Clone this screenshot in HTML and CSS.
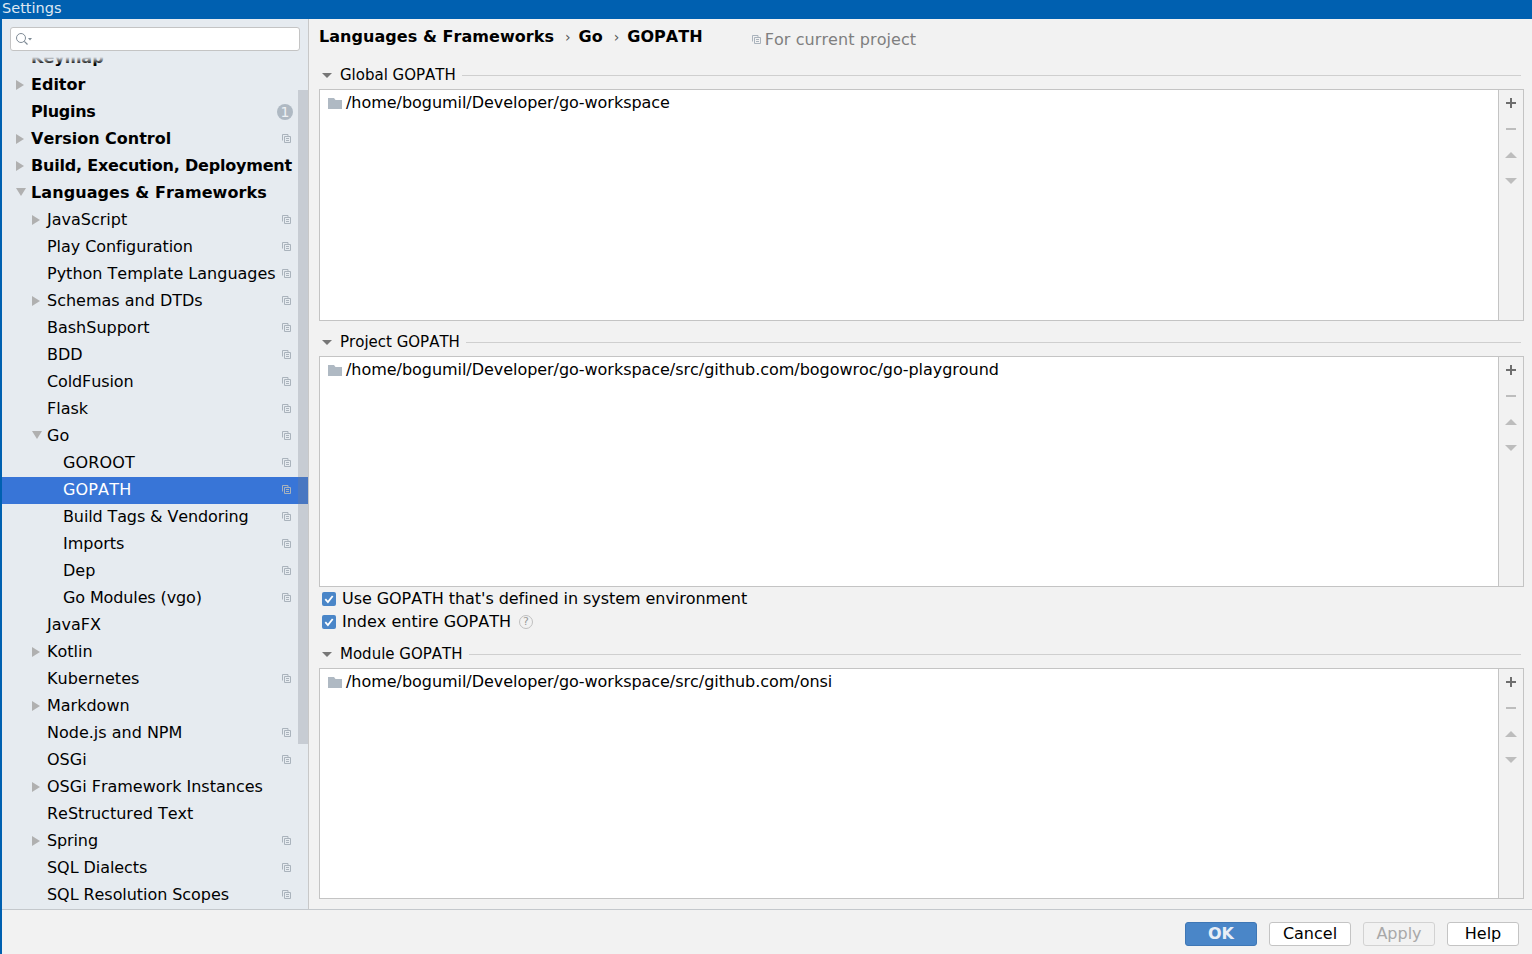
FILE: index.html
```html
<!DOCTYPE html>
<html lang="en">
<head>
<meta charset="utf-8">
<title>Settings</title>
<link rel="stylesheet" href="styles.css">
</head>
<body>
<svg class="defs" width="0" height="0" aria-hidden="true">
  <symbol id="copy" viewBox="0 0 9 9"><path d="M.5 6.500v-6h5.500v2" fill="none" stroke="#aab3bc"/><path d="M2.500 2.500h6v6h-6zM4 4.500h3M4 6.500h3" fill="none" stroke="#aab3bc"/></symbol>
  <symbol id="folder" viewBox="0 0 14 12"><path d="M0 1h6l1.500 2H14v9H0z" fill="#afb9c3"/></symbol>
  <symbol id="check" viewBox="0 0 14 14"><rect width="14" height="14" rx="2" fill="#4a86c8"/><path d="M3.300 7.200l2.600 2.800 4.800-6" fill="none" stroke="#fff" stroke-width="1.800"/></symbol>
  <symbol id="tools" viewBox="0 0 24 104"><path d="M12 8v10M7 13h10" stroke="#6e6e6e" stroke-width="2"/><path d="M7 39h10" stroke="#bdbdbd" stroke-width="2"/><path d="M12 62l6 6H6z" fill="#bdbdbd"/><path d="M12 94l-6-6h12z" fill="#bdbdbd"/></symbol>
</svg>
<div class="window">
  <header class="titlebar">Settings</header>
  <div class="main">
    <aside class="sidebar">
      <div class="search-wrap">
        <div class="search">
          <svg class="search-icon" width="18" height="14" viewBox="0 0 18 14"><circle cx="6" cy="6" r="4.500" fill="none" stroke="#7f8b96"/><path d="M9.300 9.300l3.200 3.200" stroke="#7f8b96" stroke-width="1.200"/><path d="M13 6h4l-2 2.500z" fill="#7f8b96"/></svg>
        </div>
      </div>
      <div class="tree-view">
        <ul class="tree">
          <li class="row l0 bold">Keymap</li>
          <li class="row l0 bold closed">Editor</li>
          <li class="row l0 bold t3">Plugins<span class="badge">1</span></li>
          <li class="row l0 bold closed">Version Control<svg class="copy"><use href="#copy"/></svg></li>
          <li class="row l0 bold closed t4">Build, Execution, Deployment</li>
          <li class="row l0 bold open w1">Languages &amp; Frameworks</li>
          <li class="row l1 closed">JavaScript<svg class="copy"><use href="#copy"/></svg></li>
          <li class="row l1 t1">Play Configuration<svg class="copy"><use href="#copy"/></svg></li>
          <li class="row l1">Python Template Languages<svg class="copy"><use href="#copy"/></svg></li>
          <li class="row l1 closed">Schemas and DTDs<svg class="copy"><use href="#copy"/></svg></li>
          <li class="row l1">BashSupport<svg class="copy"><use href="#copy"/></svg></li>
          <li class="row l1">BDD<svg class="copy"><use href="#copy"/></svg></li>
          <li class="row l1 t2">ColdFusion<svg class="copy"><use href="#copy"/></svg></li>
          <li class="row l1">Flask<svg class="copy"><use href="#copy"/></svg></li>
          <li class="row l1 open">Go<svg class="copy"><use href="#copy"/></svg></li>
          <li class="row l2 w2">GOROOT<svg class="copy"><use href="#copy"/></svg></li>
          <li class="row l2 selected w2">GOPATH<svg class="copy"><use href="#copy"/></svg></li>
          <li class="row l2 t2">Build Tags &amp; Vendoring<svg class="copy"><use href="#copy"/></svg></li>
          <li class="row l2">Imports<svg class="copy"><use href="#copy"/></svg></li>
          <li class="row l2">Dep<svg class="copy"><use href="#copy"/></svg></li>
          <li class="row l2 t2">Go Modules (vgo)<svg class="copy"><use href="#copy"/></svg></li>
          <li class="row l1">JavaFX</li>
          <li class="row l1 closed">Kotlin</li>
          <li class="row l1 w1">Kubernetes<svg class="copy"><use href="#copy"/></svg></li>
          <li class="row l1 closed">Markdown</li>
          <li class="row l1">Node.js and NPM<svg class="copy"><use href="#copy"/></svg></li>
          <li class="row l1">OSGi<svg class="copy"><use href="#copy"/></svg></li>
          <li class="row l1 closed">OSGi Framework Instances</li>
          <li class="row l1">ReStructured Text</li>
          <li class="row l1 closed t2">Spring<svg class="copy"><use href="#copy"/></svg></li>
          <li class="row l1 t1">SQL Dialects<svg class="copy"><use href="#copy"/></svg></li>
          <li class="row l1 t1">SQL Resolution Scopes<svg class="copy"><use href="#copy"/></svg></li>
        </ul>
        <div class="scrollbar"></div>
      </div>
    </aside>
    <section class="content">
      <div class="crumbs">
        <b>Languages &amp; Frameworks</b><i class="sep">›</i><b>Go</b><i class="sep">›</i><b>GOPATH</b>
        <span class="scope"><svg class="scope-icon"><use href="#copy"/></svg>For current project</span>
      </div>
      <div class="group-head first"><span class="caret"></span><span>Global GOPATH</span><span class="rule"></span></div>
      <div class="listbox tall">
        <div class="list"><div class="entry"><svg class="folder"><use href="#folder"/></svg>/home/bogumil/Developer/go-workspace</div></div>
        <div class="tools"><svg class="tool"><use href="#tools"/></svg></div>
      </div>
      <div class="group-head"><span class="caret"></span><span>Project GOPATH</span><span class="rule"></span></div>
      <div class="listbox">
        <div class="list"><div class="entry"><svg class="folder"><use href="#folder"/></svg>/home/bogumil/Developer/go-workspace/src/github.com/bogowroc/go-playground</div></div>
        <div class="tools"><svg class="tool"><use href="#tools"/></svg></div>
      </div>
      <div class="checks">
        <label class="check env"><svg class="box"><use href="#check"/></svg>Use GOPATH that's defined in system environment</label>
        <label class="check"><svg class="box"><use href="#check"/></svg>Index entire GOPATH<span class="help">?</span></label>
      </div>
      <div class="group-head"><span class="caret"></span><span>Module GOPATH</span><span class="rule"></span></div>
      <div class="listbox">
        <div class="list"><div class="entry"><svg class="folder"><use href="#folder"/></svg>/home/bogumil/Developer/go-workspace/src/github.com/onsi</div></div>
        <div class="tools"><svg class="tool"><use href="#tools"/></svg></div>
      </div>
    </section>
  </div>
  <footer class="footer">
    <button class="btn ok">OK</button>
    <button class="btn cancel">Cancel</button>
    <button class="btn apply" disabled>Apply</button>
    <button class="btn help-btn">Help</button>
  </footer>
</div>
</body>
</html>
```
FILE: styles.css
```css
* { box-sizing: border-box; }
html, body { margin: 0; padding: 0; height: 100%; overflow: hidden; }
body {
  font-family: "DejaVu Sans", sans-serif;
  font-size: 16px;
  font-kerning: none;
  color: #000;
  background: #f2f2f2;
}
.defs { position: absolute; }
.window {
  width: 1532px;
  height: 954px;
  display: flex;
  flex-direction: column;
  border-left: 2px solid #0060b0;
}
.titlebar {
  height: 19px;
  margin-left: -2px;
  padding-left: 2px;
  background: #0060b0;
  color: #dfe8f2;
  font-size: 14.5px;
  line-height: 16px;
  flex: none;
}
.main { flex: 1; display: flex; min-height: 0; }
.sidebar {
  width: 307px;
  flex: none;
  display: flex;
  flex-direction: column;
  background: #e6ebf0;
  border-right: 1px solid #c8c8c8;
}
.search-wrap { height: 38px; flex: none; padding: 8px 8px 0; }
.search {
  width: 290px;
  height: 24px;
  background: #fff;
  border: 1px solid #c4c4c4;
  border-radius: 3px;
  display: flex;
  align-items: center;
  padding-left: 4px;
}
.tree-view { flex: 1; position: relative; overflow: hidden; }
.tree-view::before {
  content: "";
  position: absolute;
  top: 0;
  left: 0;
  right: 0;
  height: 7px;
  z-index: 1;
  background: linear-gradient(#e6ebf0, rgba(230, 235, 240, 0));
}
.tree { list-style: none; margin: -12px 0 0; padding: 0; }
.row {
  height: 27px;
  line-height: 25px;
  position: relative;
  white-space: nowrap;
}
.l0 { padding-left: 29px; }
.l1 { padding-left: 45px; }
.l2 { padding-left: 61px; }
.bold { font-weight: 700; }
.t1 { letter-spacing: -0.06px; }
.t2 { letter-spacing: -0.12px; }
.t3 { letter-spacing: -0.28px; }
.t4 { letter-spacing: -0.21px; }
.w1 { letter-spacing: 0.09px; }
.w2 { letter-spacing: 0.16px; }
.closed::before, .open::before {
  content: "";
  position: absolute;
  top: 8px;
  width: 0;
  height: 0;
}
.closed::before {
  border-left: 8px solid #b0b0b0;
  border-top: 5px solid transparent;
  border-bottom: 5px solid transparent;
}
.open::before {
  border-top: 8px solid #b0b0b0;
  border-left: 5px solid transparent;
  border-right: 5px solid transparent;
}
.l0.closed::before { left: 14px; }
.l0.open::before { left: 14px; }
.l1.closed::before { left: 30px; }
.l1.open::before { left: 30px; }
.selected { background: #3875d7; color: #fff; }
.copy {
  position: absolute;
  left: 280px;
  top: 8px;
  width: 9px;
  height: 9px;
}
.badge {
  position: absolute;
  left: 275px;
  top: 5px;
  width: 16px;
  height: 16px;
  border-radius: 50%;
  background: #afb9c3;
  color: #eef1f4;
  font-size: 14px;
  line-height: 16px;
  font-weight: 400;
  letter-spacing: 0;
  text-align: center;
}
.scrollbar {
  position: absolute;
  right: 0;
  top: 33px;
  width: 10px;
  height: 654px;
  background: rgba(120, 125, 135, 0.28);
}
.content {
  flex: 1;
  min-width: 0;
  display: flex;
  flex-direction: column;
  padding: 0 8px 0 10px;
}
.crumbs {
  height: 36px;
  flex: none;
  display: flex;
  align-items: baseline;
  padding-top: 7px;
  line-height: 22px;
  white-space: nowrap;
}
.crumbs b { font-weight: 700; letter-spacing: 0.05px; }
.sep {
  font-style: normal;
  color: #555;
  width: 24.500px;
  padding-left: 3px;
  text-align: center;
  font-size: 14px;
}
.scope {
  margin-left: 49px;
  color: #7f7f7f;
  letter-spacing: 0.08px;
  position: relative;
  top: 2px;
  display: flex;
  align-items: center;
}
.scope-icon { width: 9px; height: 9px; margin-right: 4px; }
.group-head {
  height: 35px;
  flex: none;
  display: flex;
  align-items: center;
  padding-top: 6px;
  font-size: 15px;
  white-space: nowrap;
}
.group-head.first { height: 34px; padding-top: 5px; }
.caret {
  width: 0;
  height: 0;
  margin: 1px 8px 0 3px;
  border-top: 5px solid #777;
  border-left: 5px solid transparent;
  border-right: 5px solid transparent;
}
.rule { flex: 1; height: 1px; background: #cfcfcf; margin: 2px 3px 0 6px; }
.first .rule { margin-top: 1px; }
.listbox {
  flex: none;
  height: 231px;
  display: flex;
  border: 1px solid #c4c4c4;
}
.listbox.tall { height: 232px; }
.list { flex: 1; background: #fff; padding: 1px 8px 0; }
.entry {
  height: 24px;
  line-height: 24px;
  display: flex;
  align-items: center;
  letter-spacing: -0.04px;
  white-space: nowrap;
}
.folder { width: 14px; height: 12px; margin-right: 4px; }
.tools {
  width: 25px;
  flex: none;
  background: #f2f2f2;
  border-left: 1px solid #c4c4c4;
}
.tool { width: 24px; height: 104px; display: block; }
.checks { flex: none; }
.check {
  display: flex;
  align-items: center;
  height: 23px;
  padding-left: 3px;
  white-space: nowrap;
}
.env { letter-spacing: -0.06px; }
.box { width: 14px; height: 14px; margin-right: 6px; }
.help {
  width: 14px;
  height: 14px;
  margin-left: 8px;
  border: 1px solid #c0c0c0;
  border-radius: 50%;
  color: #9a9a9a;
  font-size: 11px;
  line-height: 12px;
  text-align: center;
}
.footer {
  height: 45px;
  flex: none;
  display: flex;
  justify-content: flex-end;
  align-items: flex-start;
  gap: 12px;
  padding: 12px 13px 0 0;
  border-top: 1px solid #c4c8cc;
}
.btn {
  height: 24px;
  padding: 0;
  font: 16px/22px "DejaVu Sans", sans-serif;
  font-kerning: none;
  border: 1px solid #c4c4c4;
  border-radius: 3px;
  background: #fff;
  color: #000;
}
.ok { width: 72px; background: #4a86c8; border-color: #3f77b5; color: #e8eef6; font-weight: 700; }
.cancel { width: 82px; }
.apply { width: 72px; background: #f2f2f2; color: #a8a8a8; border-color: #d2d2d2; }
.help-btn { width: 72px; }
```
